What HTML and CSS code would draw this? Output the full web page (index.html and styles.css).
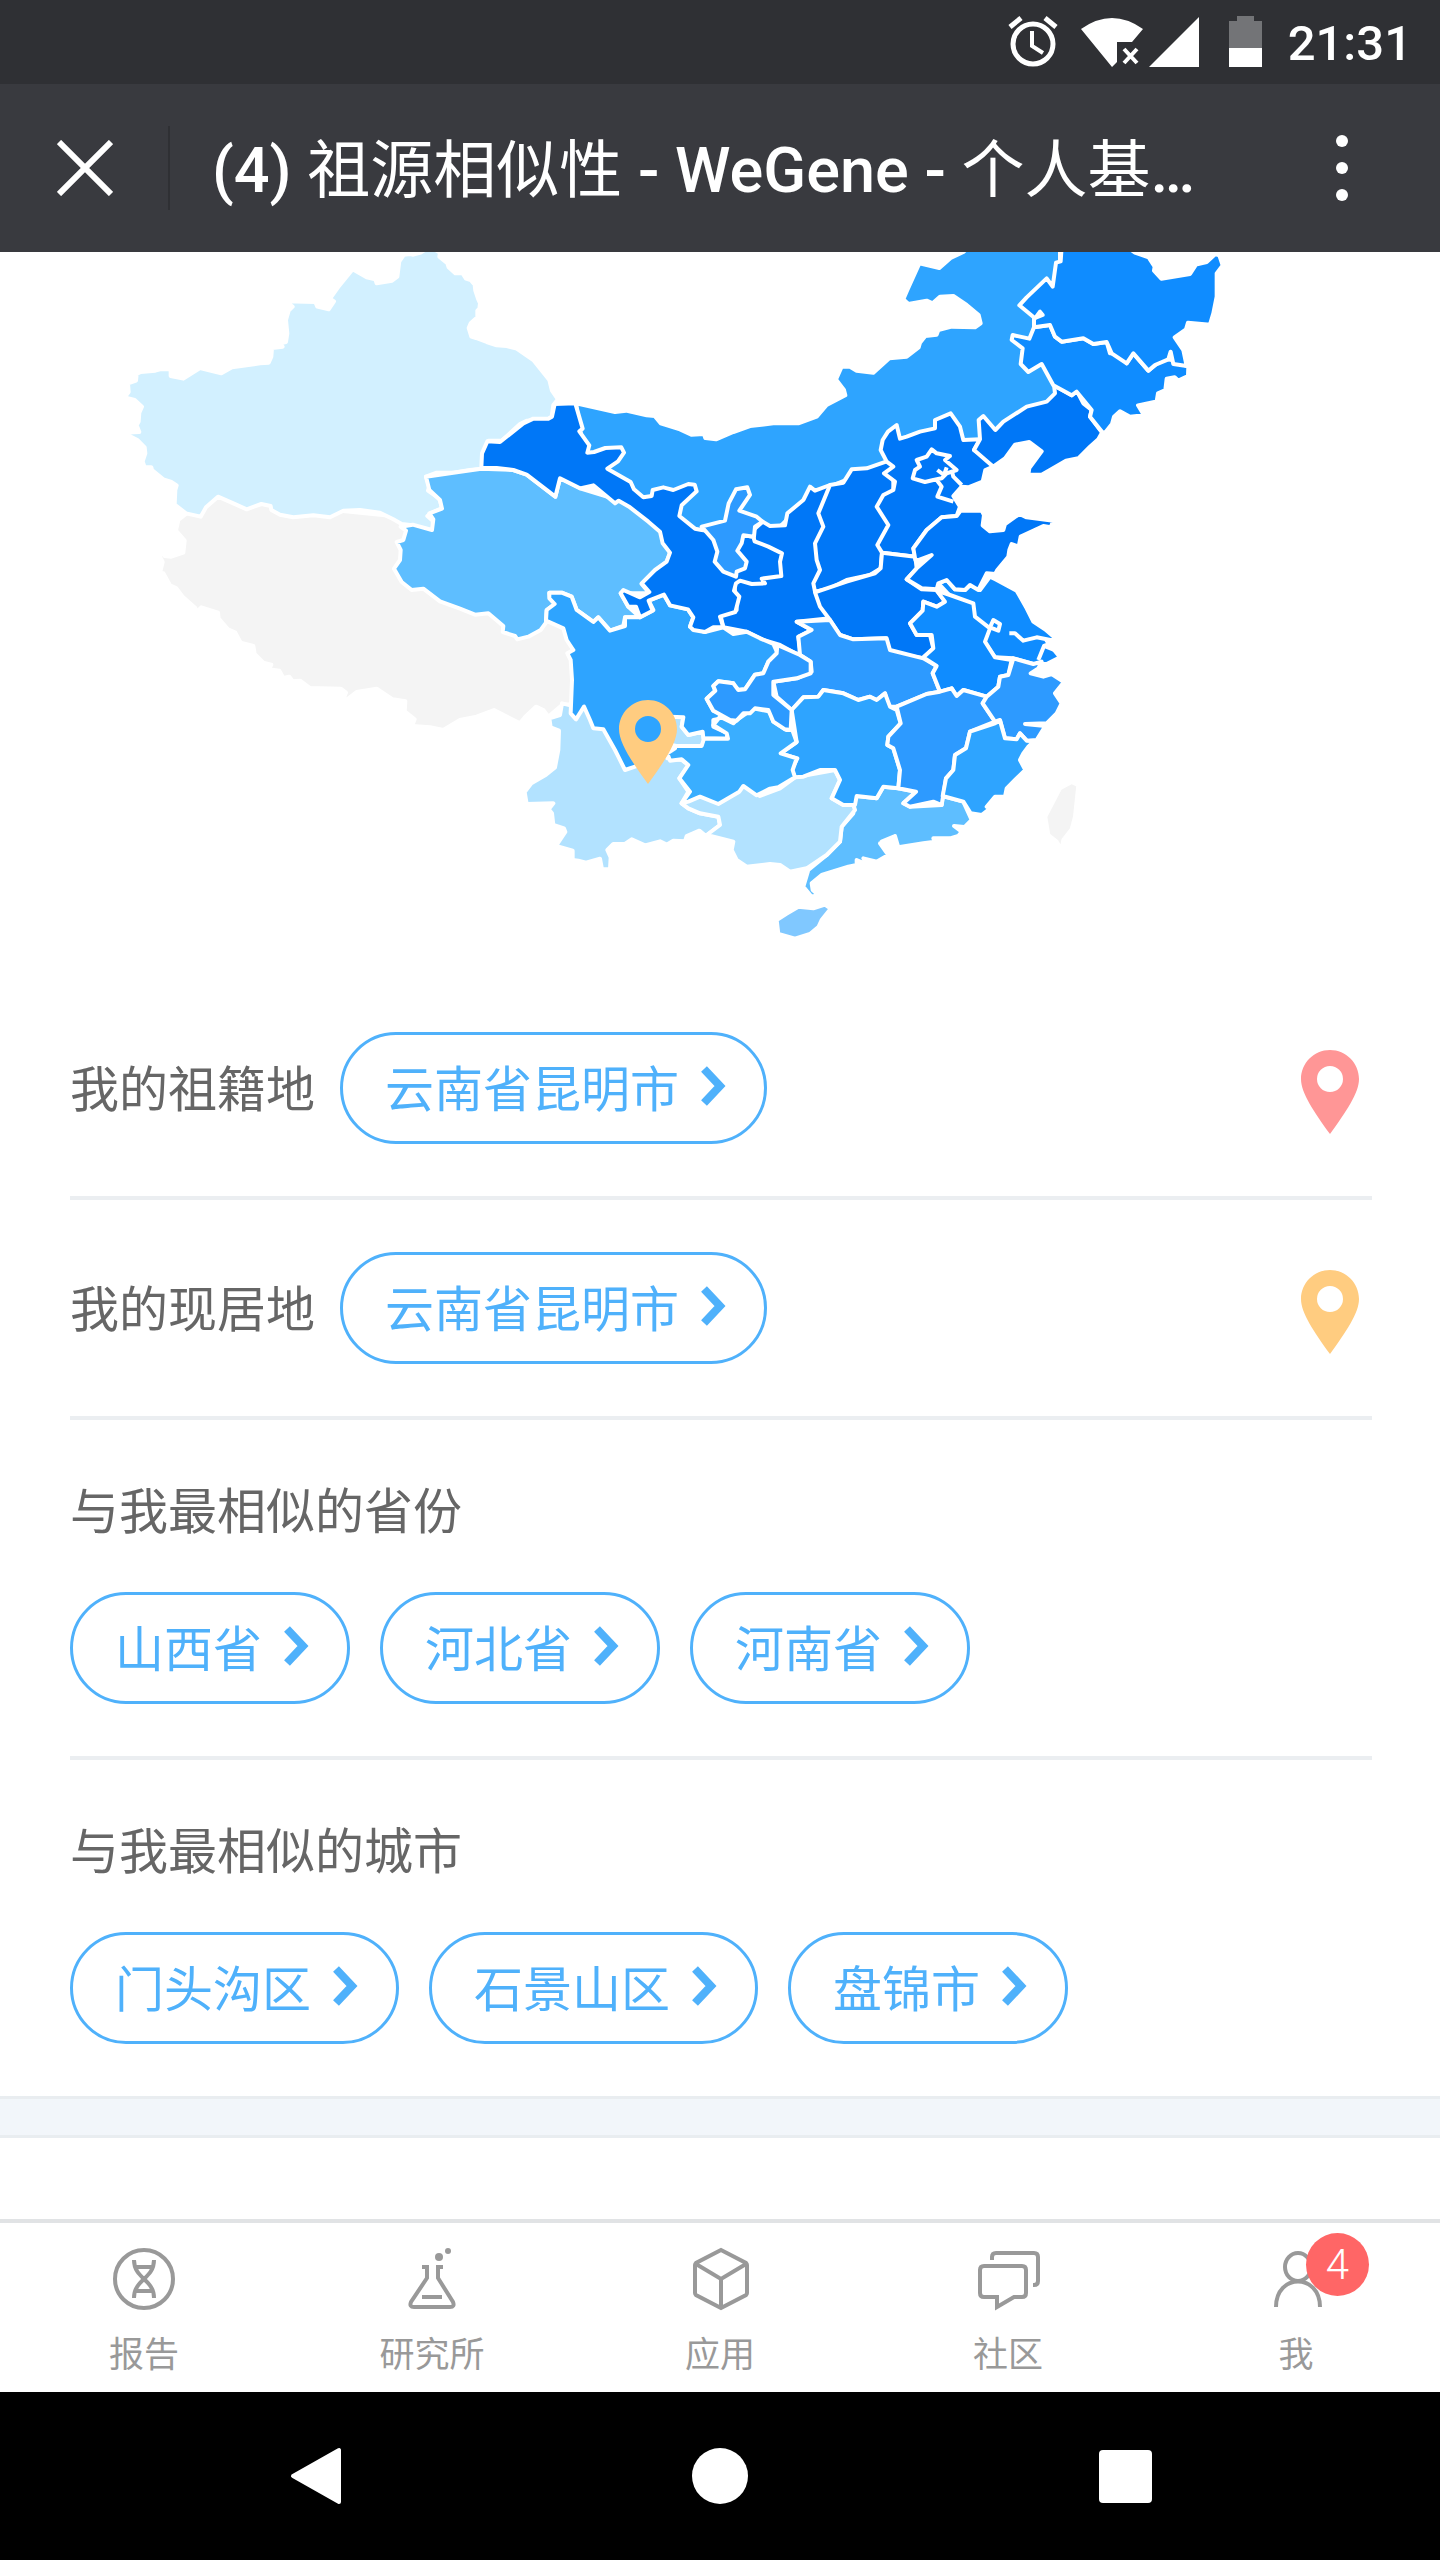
FILE: index.html
```html
<!DOCTYPE html>
<html lang="zh-CN">
<head>
  <meta charset="UTF-8" />
  <meta name="viewport" content="width=device-width, initial-scale=1" />
  <title>(4) 祖源相似性 - WeGene</title>
  <link rel="stylesheet" href="styles.css">
</head>
<body>
  <!-- shared symbols -->
  <svg class="defs" aria-hidden="true">
    <symbol id="pin" viewBox="0 0 58 84">
      <path fill-rule="evenodd" d="M29 0C13 0 0 13 0 29C0 43 13 62 29 84C45 62 58 43 58 29C58 13 45 0 29 0ZM29 16a13 13 0 1 1 0 26a13 13 0 1 1 0-26Z" />
    </symbol>
    <symbol id="arrow" viewBox="0 0 28 44">
      <path d="M4 3L20 20L4 37" fill="none" stroke="currentColor" stroke-width="8" />
    </symbol>
  </svg>

  <div class="statusbar">
    <svg class="status-icons" viewBox="0 0 262 84" fill="#fff">
      <g fill="none" stroke="#fff" stroke-width="5">
        <circle cx="33" cy="44" r="20" />
        <path d="M32 31V46L43 53" stroke-width="4" />
        <path d="M10 27L21 18M45 18L56 27" />
      </g>
      <path d="M81 29Q112 7 143 29L132 42H117V62L112 67Z" />
      <path d="M124 49L137 63M137 49L124 63" stroke="#fff" stroke-width="4" />
      <path d="M149 67H199V17Z" />
      <path d="M229 21H237V16H254V21H262V48H229Z" fill="#737477" />
      <path d="M229 48H262V67H229Z" />
    </svg>
    <span class="clock">21:31</span>
  </div>

  <header class="titlebar">
    <button class="close" aria-label="关闭">
      <svg width="56" height="56" viewBox="0 0 56 56"><path d="M2 2L54 54M54 2L2 54" stroke="#fff" stroke-width="6" /></svg>
    </button>
    <h1><b>(4)</b> 祖源相似性 <b>- WeGene -</b> 个人基<b>…</b></h1>
    <button class="more" aria-label="更多">
      <svg width="12" height="66" viewBox="0 0 12 66" fill="#fff"><circle cx="6" cy="6" r="6" /><circle cx="6" cy="33" r="6" /><circle cx="6" cy="60" r="6" /></svg>
    </button>
  </header>

  <main>
    <svg class="map" viewBox="0 252 1440 728" role="img" aria-label="中国地图">
      <g transform="translate(100 240) scale(.33333)">
        <path class="c0" d="M258 822L235 840 228 872 254 902 250 938 214 950 194 948 184 932 180 950 188 966 180 998 190 1000 210 1036 228 1044 248 1070 286 1104 288 1118 304 1102 354 1118 356 1136 384 1168 406 1178 422 1208 460 1218 464 1242 490 1268 514 1274 506 1288 538 1292 550 1314 568 1310 578 1324 600 1322 630 1344 722 1346 738 1358 726 1390 770 1356 830 1346 878 1378 916 1384 914 1414 944 1438 936 1458 990 1462 1030 1470 1080 1440 1130 1430 1182 1410 1260 1450 1276 1430 1308 1400 1330 1410 1345 1430 1380 1400 1420 1390 1425 1240 1400 1150 1340 1120 1300 1000 900 830 500 790 354 770Z" />
        <path class="c1" d="M912 44L930 42 940 44 962 38 990 20 1020 38 1018 50 1042 70 1046 82 1066 100 1088 100 1098 116 1112 120 1124 134 1126 152 1134 176 1140 190 1138 206 1132 212 1132 232 1112 250 1106 264 1114 290 1128 294 1160 306 1190 316 1220 318 1250 326 1300 360 1348 420 1356 452 1374 478 1360 495 1355 530 1340 540 1280 542 1260 552 1205 602 1165 602 1158 630 1148 642 1150 686 1110 690 1060 698 1010 698 978 710 988 740 984 752 1018 776 1026 804 992 820 982 828 998 842 1000 870 984 872 936 856 905 852 880 838 840 818 780 810 730 812 690 832 640 826 580 832 540 824 514 810 512 798 484 792 440 808 400 790 354 770 318 802 302 830 258 820 224 794 226 750 230 736 214 726 190 718 156 690 154 682 134 682 128 664 136 640 134 622 112 600 70 578 118 576 110 556 116 545 118 518 126 500 104 480 74 472 86 456 84 430 108 422 110 402 122 396 166 392 180 388 212 388 212 408 250 416 300 384 364 400 396 382 480 370 506 368 514 350 516 324 548 320 540 310 558 306 562 280 558 240 566 212 578 200 556 184 646 186 652 200 686 208 702 184 690 176 714 142 758 88 800 112 826 118 830 130 876 122 892 110 898 64Z" />
      </g>
      <g transform="translate(380 380) scale(.33333)">
        <path class="c5" d="M588 70L705 96 738 92 800 106 824 108 842 130 900 148 934 164 972 162 976 174 1008 178 1060 156 1110 138 1180 130 1255 130 1310 110 1340 75 1396 46 1392 30 1368 -2 1385 -40 1410 -40 1430 -28 1480 -22 1528 -65 1580 -70 1616 -98 1620 -112 1636 -132 1670 -136 1675 -150 1715 -160 1785 -158 1802 -170 1796 -195 1760 -225 1720 -252 1680 -250 1658 -230 1640 -238 1585 -228 1570 -242 1582 -270 1618 -350 1678 -336 1712 -366 1750 -384 1790 -420 2040 -420 2040 20 2025 60 1840 200 1790 195 1520 250 1300 340 1200 440 1140 560 1000 500 900 420 760 350 620 220 600 150Z" />
        <path class="c2" d="M508 1015L540 1005 546 970 568 975 700 1000 900 1008 910 1012 905 1040 925 1065 970 1055 972 1085 965 1098 900 1100 875 1095 862 1135 905 1140 925 1155 898 1195 925 1235 905 1270 925 1285 960 1300 1015 1310 1020 1335 978 1368 958 1352 920 1368 915 1384 880 1382 860 1394 840 1384 795 1396 755 1378 735 1392 700 1392 682 1410 692 1432 690 1468 666 1468 660 1436 618 1448 595 1442 578 1440 578 1412 528 1398 556 1356 552 1345 520 1335 516 1300 506 1288 520 1270 440 1272 434 1236 454 1210 498 1184 525 1162 535 1110 537 1052 512 1042Z" />
        <path class="c4" d="M138 290L220 278 304 266 400 270 440 284 526 350 540 295 600 325 720 362 830 430 870 518 860 545 830 570 785 612 808 640 722 640 745 680 780 712 735 712 730 738 690 752 655 712 640 726 590 690 575 650 545 638 508 638 510 655 524 672 500 690 498 728 482 750 445 770 412 778 405 768 368 756 370 738 325 700 285 704 240 686 180 664 130 626 95 630 65 606 42 566 60 540 62 510 50 486 70 480 78 452 62 440 98 434 156 450 160 418 148 400 186 386 180 360 148 330Z" />
        <path class="c8" d="M1148 425L1170 438 1215 436 1222 400 1270 360 1290 320 1305 332 1350 315 1360 400 1320 520 1320 640 1350 715 1250 725 1295 750 1255 770 1262 820 1250 822 1200 795 1150 780 1100 755 1030 742 1020 700 1070 690 1062 600 1120 590 1120 450Z" />
      </g>
      <g transform="translate(760 240) scale(.33333)">
        <path class="c8" d="M210 735L250 728 275 688 320 685 378 665 400 660 400 860 380 940 366 938 362 985 330 1005 260 1020 210 1045 165 1055 160 1030 180 990 170 960 165 910 190 860 175 820Z" />
        <path class="c8" d="M366 938L352 915 385 855 350 800 370 765 400 750 405 725 372 700 400 680 380 665 362 630 368 600 384 575 410 555 420 596 440 590 480 575 525 565 525 540 572 520 600 560 610 600 660 598 642 630 690 660 700 680 676 690 668 725 625 742 605 740 580 768 600 800 590 828 545 832 500 870 460 925 466 950Z" />
        <path class="c8" d="M660 598L656 540 670 528 706 570 730 545 800 500 860 485 885 460 882 436 935 466 950 452 970 490 995 510 990 530 1026 578 1015 598 990 620 955 655 918 662 870 690 845 704 805 704 808 684 845 634 808 606 765 614 735 655 700 680 642 630Z" />
        <path class="c7" d="M822 262L870 255 885 290 905 305 970 295 1000 312 1040 306 1050 340 1075 340 1100 370 1120 340 1165 392 1210 355 1235 360 1285 380 1284 408 1255 422 1244 412 1220 416 1216 450 1194 460 1190 484 1134 496 1152 526 1110 530 1080 514 1062 530 1056 552 1034 580 1026 575 990 530 995 510 950 455 935 466 880 436 845 372 805 396 782 372 788 325 755 300 758 285 808 296Z" />
        <path class="c7" d="M905 20L1100 20 1125 38 1166 52 1184 80 1182 92 1204 116 1290 102 1308 74 1340 66 1366 42 1378 46 1388 76 1370 100 1370 170 1360 220 1350 254 1284 248 1278 268 1244 292 1270 330 1280 378 1240 372 1232 335 1225 358 1185 375 1165 392 1120 340 1100 370 1055 340 1040 306 1000 312 970 295 905 305 885 290 870 255 822 262 822 235 848 225 840 215 825 235 778 196 800 172 860 115 878 140 888 68 902 64Z" />
        <path class="line" d="M515 628L530 640 570 648 555 660 590 690 560 700 545 715 520 720 495 726 458 715 465 690 480 680 470 660 500 650ZM532 690L552 705 560 682M530 720L545 740 532 770 580 785M575 690L580 710 605 735" />
      </g>
      <g transform="translate(760 540) scale(.33333)">
        <path class="c8" d="M165 157L260 125 345 100 362 85 366 38 466 50 470 85 440 118 485 148 530 150 555 185 530 200 490 185 488 212 450 250 470 285 510 285 520 325 490 355 430 345 385 330 378 295 280 298 240 285 210 240 180 200Z" />
        <path class="c4" d="M250 790L290 768 350 775 370 740 415 745 468 755 430 790 450 800 545 795 548 768 610 785 635 840 615 860 620 862 582 858 605 875 595 888 570 895 520 895 525 905 490 910 415 922 405 888 365 905 400 925 360 910 385 945 350 965 310 955 325 975 290 960 290 975 265 980 185 1005 155 1030 158 1050 175 1065 155 1070 130 1040 145 990 200 945 240 905 245 860 280 820Z" />
        <path class="c2" d="M-235 790L-215 805 -180 820 -125 830 -120 855 -160 885 -80 905 -85 930 -70 960 -40 980 30 972 60 975 90 995 140 985 170 965 200 945 240 905 245 860 285 810 280 795 250 795 215 775 240 720 225 690 105 712 60 745 0 768 -100 700 -200 750Z" />
        <path class="c6" d="M210 240L240 285 280 298 380 295 390 330 490 355 530 378 518 400 540 455 500 462 410 500 385 500 375 460 350 480 330 470 295 480 250 460 190 450 175 470 130 472 95 510 50 470 40 425 110 415 155 395 152 365 120 345 115 290 155 270 110 245Z" />
        <path class="c7" d="M535 130L560 120 585 148 615 150 630 135 660 150 690 110 706 118 770 152 800 205 820 245 855 268 890 298 860 302 900 352 860 372 820 372 760 355 705 352 600 200Z" />
        <path class="c7" d="M555 185L530 152 570 165 640 190 645 230 690 265 675 305 705 352 755 360 745 405 720 410 715 440 680 470 610 450 590 468 575 445 540 455 518 400 530 378 490 352 520 325 515 285 470 285 450 250 488 212 490 185 530 200Z" />
        <path class="line" d="M748 280L765 280 790 302 830 292 890 304 852 318 898 336M852 318L835 360M690 262L700 240 720 252 715 272Z" />
        <path class="c5" d="M95 510L130 472 175 470 190 450 250 460 295 480 330 470 350 480 375 460 390 500 410 510 422 550 385 590 382 615 400 625 420 690 415 745 370 740 350 775 290 768 285 795 250 795 215 775 240 720 225 690 180 690 130 710 105 712 95 690 112 655 62 640 110 606Z" />
        <path class="c6" d="M410 500L500 462 540 455 575 445 590 468 610 450 680 470 668 490 705 545 630 575 618 625 585 645 580 690 558 715 545 795 520 785 450 800 430 790 468 755 415 745 420 690 400 625 382 615 385 590 422 550Z" />
        <path class="c6" d="M760 355L820 372 845 365 835 385 812 400 850 410 875 402 912 426 885 460 905 490 890 520 860 550 795 552 856 558 830 600 800 602 780 580 770 598 735 595 720 540 705 545 668 490 680 470 715 440 720 410 745 405Z" />
        <path class="c5" d="M705 550L720 542 735 595 770 598 780 580 800 602 822 604 805 620 790 640 780 660 796 690 765 720 740 745 735 770 705 770 680 800 690 806 665 825 632 820 610 785 548 768 558 715 580 690 585 645 618 625 630 575Z" />
        <path class="c3" d="M50 1140L78 1122 115 1100 160 1105 195 1094 212 1106 185 1140 176 1160 150 1182 105 1196 55 1182Z" />
        <path class="c0" d="M935 726L955 736 945 830 935 868 910 900 905 930 890 905 865 885 856 830 900 745Z" />
        <path class="c0" d="M416 946L440 930 464 940Z" />
        <path class="c8" d="M466 60L460 25 500 -30 545 -68 590 -72 602 -88 665 -88 672 -75 668 -44 690 -26 730 -30 735 -48 778 -78 800 -68 880 -58 872 -38 850 -42 782 -10 776 20 755 12 748 30 745 50 712 90 706 102 680 100 655 150 630 135 615 150 585 148 560 120 535 130 530 148 485 145 440 118 470 85 515 45 475 60Z" />
      </g>
      <g transform="translate(380 380) scale(.33333)">
        <path class="c5" d="M508 638L545 638 575 650 590 690 640 726 655 712 690 752 735 738 735 712 780 712 820 690 806 662 852 644 870 676 924 688 940 712 930 740 975 756 1030 742 1060 762 1100 755 1140 775 1180 792 1192 818 1165 845 1150 880 1125 884 1095 928 1070 930 1060 910 1015 904 1000 918 1006 932 980 956 1000 992 1050 1010 1000 1020 1000 1040 1044 1060 1040 1076 970 1075 968 1055 925 1065 905 1040 910 1012 870 1010 865 1095 820 1110 800 1140 765 1160 735 1170 715 1130 705 1110 670 1048 640 1045 630 1020 612 980 588 1018 572 1000 576 900 572 840 562 820 580 810 560 780 550 745 498 722 500 690 524 672 508 655Z" />
        <path class="c8" d="M524 72L586 70 608 146 598 154 628 196 622 218 642 216 676 204 724 202 732 218 714 244 682 266 752 306 762 328 790 352 815 348 818 330 850 322 880 330 925 312 944 314 950 334 905 376 898 408 945 446 965 450 1090 466 1120 470 1124 484 1165 500 1206 520 1200 545 1204 588 1145 596 1155 610 1115 612 1080 602 1068 610 1062 632 1078 650 1066 696 1020 710 1030 742 1000 742 975 756 940 750 930 740 940 712 924 688 870 676 852 644 806 662 818 692 780 712 768 680 745 680 722 640 730 630 780 652 808 636 785 610 825 570 860 545 870 518 848 490 840 455 805 425 750 382 716 362 705 370 640 316 600 325 540 295 526 350 440 284 400 270 350 264 304 264 306 220 322 184 360 186 430 130 460 116 505 116 516 110Z" />
        <path class="c6" d="M965 440L1035 422 1046 370 1068 328 1102 322 1110 345 1078 392 1130 410 1148 425 1125 440 1122 470 1090 466 1085 490 1072 512 1100 545 1095 565 1070 575 1068 590 1030 575 1004 545 1012 515 1000 480Z" />
        <path class="c45" d="M875 1098L965 1098 972 1076 1044 1076 1040 1060 1000 1035 1020 1010 1060 1030 1070 1020 1120 985 1170 995 1180 1025 1220 1050 1237 1050 1250 1086 1202 1120 1250 1135 1238 1170 1245 1192 1195 1222 1170 1226 1130 1246 1090 1218 1078 1235 1015 1272 960 1250 925 1265 905 1270 930 1235 898 1195 925 1155 905 1138 870 1142 862 1120 885 1105Z" />
        <path class="c6" d="M1192 795L1260 825 1292 845 1292 880 1250 895 1180 905 1180 945 1235 990 1232 1050 1215 1048 1180 1025 1165 990 1125 985 1110 1000 1090 1000 1070 1022 1050 1020 1000 992 980 956 1006 932 1000 918 1015 904 1060 910 1075 930 1095 928 1125 884 1150 880 1165 845 1190 820Z" />
      </g>
      <use href="#pin" class="map-pin" x="619" y="700" width="58" height="84" />
    </svg>

    <section class="row place">
      <span class="label">我的祖籍地</span>
      <a class="pill" href="#">云南省昆明市<svg><use href="#arrow" /></svg></a>
      <svg class="pin pin-red"><use href="#pin" /></svg>
    </section>
    <section class="row place">
      <span class="label">我的现居地</span>
      <a class="pill" href="#">云南省昆明市<svg><use href="#arrow" /></svg></a>
      <svg class="pin pin-orange"><use href="#pin" /></svg>
    </section>
    <section class="row">
      <h2 class="label">与我最相似的省份</h2>
      <div class="pills">
        <a class="pill" href="#">山西省<svg><use href="#arrow" /></svg></a>
        <a class="pill" href="#">河北省<svg><use href="#arrow" /></svg></a>
        <a class="pill" href="#">河南省<svg><use href="#arrow" /></svg></a>
      </div>
    </section>
    <section class="row last">
      <h2 class="label">与我最相似的城市</h2>
      <div class="pills">
        <a class="pill" href="#">门头沟区<svg><use href="#arrow" /></svg></a>
        <a class="pill" href="#">石景山区<svg><use href="#arrow" /></svg></a>
        <a class="pill" href="#">盘锦市<svg><use href="#arrow" /></svg></a>
      </div>
    </section>
    <div class="divider"></div>
  </main>

  <nav class="tabs">
    <a href="#">
      <svg viewBox="0 0 64 64">
        <circle cx="32" cy="32" r="29" />
        <path d="M22 13C22 32 42 32 42 51M42 13C42 32 22 32 22 51M24 20H40M24 44H40" />
      </svg>
      报告
    </a>
    <a href="#">
      <svg viewBox="0 0 64 64">
        <path d="M22 20H27V31L11 55Q9 60 14 60H50Q55 60 53 55L38 31V20H43M22 50H42" />
        <g class="solid"><circle cx="39" cy="10" r="4" /><circle cx="48" cy="4" r="3" /></g>
      </svg>
      研究所
    </a>
    <a href="#">
      <svg viewBox="0 0 64 64">
        <path d="M33 3L58 16Q59 17 59 18V46Q59 47 58 48L33 61L8 48Q7 47 7 46V18Q7 17 8 16ZM8 17L33 32L58 17M33 32V61" />
      </svg>
      应用
    </a>
    <a href="#">
      <svg viewBox="0 0 64 64">
        <path d="M16 13V10Q16 6 20 6H58Q62 6 62 10V34Q62 38 58 38H57M8 19H46Q50 19 50 23V46Q50 50 46 50H38L21 60V50H8Q4 50 4 46V23Q4 19 8 19Z" />
      </svg>
      社区
    </a>
    <a href="#">
      <svg viewBox="0 0 64 64">
        <ellipse cx="34" cy="20" rx="13" ry="14" />
        <path d="M12 60C12 26 56 26 56 60" />
      </svg>
      我
      <span class="badge">4</span>
    </a>
  </nav>

  <footer class="softkeys">
    <button aria-label="返回"><svg viewBox="0 0 58 58"><path d="M53 3V55L7 29Z" stroke="#fff" stroke-width="4" stroke-linejoin="round" /></svg></button>
    <button aria-label="主页"><svg viewBox="0 0 58 58"><circle cx="29" cy="29" r="28" /></svg></button>
    <button aria-label="最近"><svg viewBox="0 0 58 58"><rect x="3" y="3" width="53" height="53" rx="4" /></svg></button>
  </footer>
</body>
</html>
```
FILE: styles.css
```css
* { box-sizing: border-box; }
body {
  margin: 0;
  min-height: 100vh;
  display: flex;
  flex-direction: column;
  font-family: Roboto, "Noto Sans CJK SC", sans-serif;
  background: #fff;
  color: #666;
}
svg { display: block; }
a { text-decoration: none; }
button { border: none; background: none; padding: 0; cursor: pointer; }
h1, h2 { margin: 0; font-weight: 400; }
.defs { position: absolute; width: 0; height: 0; }

/* top bars */
.statusbar {
  height: 84px;
  background: #2f3034;
  color: #fff;
  display: flex;
  align-items: center;
  justify-content: flex-end;
  padding-right: 28px;
}
.status-icons { width: 262px; height: 84px; margin-right: 26px; }
.clock { font-size: 49px; font-weight: 500; line-height: 84px; padding-top: 4px; }
.titlebar {
  height: 168px;
  background: #393a3f;
  color: #fff;
  display: flex;
  align-items: center;
}
.close {
  height: 84px;
  width: 170px;
  padding-left: 57px;
  border-right: 2px solid #2f3034;
}
.titlebar h1 {
  flex: 1;
  padding: 6px 0 0 42px;
  font-size: 63px;
  line-height: 84px;
  white-space: nowrap;
}
.titlebar b { font-weight: 500; }
.more { padding: 0 92px; }

/* map */
main { flex: 1; }
.map { width: 100%; }
.map g path { stroke: #fff; stroke-width: 12; stroke-linejoin: round; }
.map .line { fill: none; }
.map-pin { fill: #ffcc80; }
.c0 { fill: #f4f4f4; }
.c1 { fill: #d2f0ff; }
.c2 { fill: #b2e2ff; }
.c3 { fill: #80c8ff; }
.c4 { fill: #5ebeff; }
.c45 { fill: #3aaeff; }
.c5 { fill: #2ea4ff; }
.c6 { fill: #2d9aff; }
.c7 { fill: #0f8cff; }
.c8 { fill: #0077f7; }

/* rows */
.row {
  margin: 0 68px 0 70px;
  padding: 52px 0;
  border-bottom: 4px solid #ebeef1;
}
.row.last { border-bottom: none; }
.place { display: flex; align-items: center; }
.label { font-size: 49px; line-height: 76px; }
.place .label { padding-top: 6px; margin-right: 25px; }
h2.label { padding-top: 3px; margin-bottom: 41px; }
.pills { display: flex; gap: 30px; }
.pill {
  display: flex;
  align-items: center;
  height: 112px;
  padding: 6px 36px 0 42px;
  border: 3px solid #4fb1fb;
  border-radius: 56px;
  font-size: 49px;
  line-height: 100px;
  color: #4fb1fb;
}
.pill svg { width: 28px; height: 44px; margin: 0 0 6px 21px; }
.pin { width: 58px; height: 84px; margin: 8px 13px 0 auto; }
.pin-red { fill: #ff9696; }
.pin-orange { fill: #ffcc80; }
.divider {
  height: 42px;
  background: #f2f6fa;
  border: solid #e9edf0;
  border-width: 3px 0;
}

/* bottom tabs */
.tabs {
  display: flex;
  height: 173px;
  border-top: 4px solid #e1e3e5;
}
.tabs a {
  flex: 1;
  position: relative;
  display: flex;
  flex-direction: column;
  align-items: center;
  padding-top: 24px;
  font-size: 35px;
  line-height: 52px;
  color: #999;
}
.tabs svg {
  width: 64px;
  height: 64px;
  margin-bottom: 19px;
  fill: none;
  stroke: #999;
  stroke-width: 4;
}
.tabs .solid { fill: #999; stroke: none; }
.badge {
  position: absolute;
  top: 10px;
  left: 50%;
  margin-left: 10px;
  width: 63px;
  height: 63px;
  border-radius: 50%;
  background: #f66;
  color: #fff;
  font-size: 42px;
  font-weight: 300;
  line-height: 63px;
  text-align: center;
}

.softkeys {
  height: 168px;
  background: #000;
  padding: 0 112px;
  display: flex;
  align-items: center;
}
.softkeys button { flex: 1; display: flex; justify-content: center; }
.softkeys svg { width: 58px; height: 58px; fill: #fff; }
```
